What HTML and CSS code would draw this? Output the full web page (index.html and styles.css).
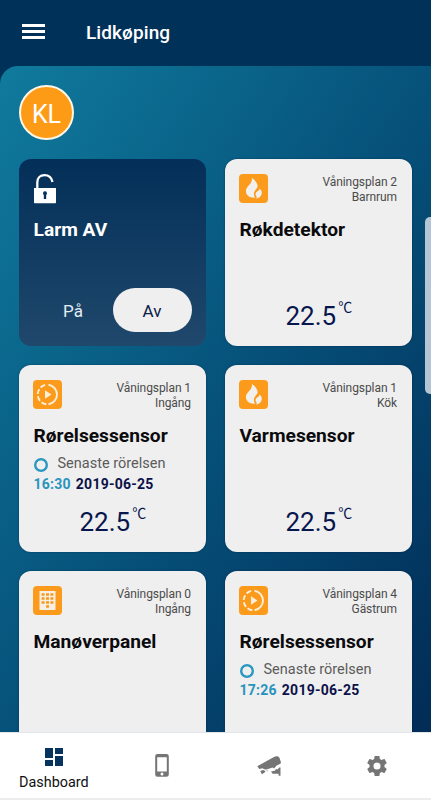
FILE: index.html
```html
<!DOCTYPE html>
<html lang="sv">
<head>
<meta charset="utf-8">
<title>Lidkøping</title>
<link rel="stylesheet" href="styles.css">
</head>
<body>
<svg class="defs" aria-hidden="true">
  <symbol id="fire" viewBox="0 0 29 29"><path d="M12.900 4c4 2.800 6.300 6.100 5.600 9.100-.5 2-3.400 3.300-3.600 6.200-.1 1.500.4 2.700 1.200 4.500-5 .4-9.200-2.400-9.200-6.700 0-4.900 6.900-7 6-13.100zM20.600 14.600c1.600 1.500 2.500 3.200 2.100 5.200-.5 2.600-2.600 4.300-5.300 4.700.3-.9.300-1.500 0-2.200-.8-1-1.300-2.300-.5-3.500 1-1.500 3.500-1.700 3.700-4.200z" fill="#f2f0ed"/></symbol>
  <symbol id="motion" viewBox="0 0 29 29"><g fill="none" stroke="#fbeedb" stroke-width="1.900"><path d="M15.500 4.700A9.900 9.900 0 0 1 15.500 24.300"/><path d="M13.300 24.300A9.900 9.900 0 0 1 4.700 14.500 9.900 9.900 0 0 1 13.300 4.700" stroke-dasharray="5.200 2.100"/></g><path d="M12 10.300v8.400l6.500-4.200z" fill="#fbeedb"/></symbol>
  <symbol id="keypad" viewBox="0 0 29 29"><path d="M6.500 5h16v19h-16z" fill="#f7efe4"/><path d="M8.600 7.200h3v2.600h-3zM13 7.200h3v2.600h-3zM17.400 7.200h3v2.600h-3zM8.600 11.200h3v2.600h-3zM13 11.200h3v2.600h-3zM17.400 11.200h3v2.600h-3zM8.600 15.200h3v2.600h-3zM13 15.200h3v2.600h-3zM17.400 15.200h3v2.600h-3zM13 19.200h3v2.600h-3z" fill="#f59a1d"/></symbol>
</svg>
<div class="app">
  <header class="topbar">
    <button class="menu" aria-label="Meny"><i></i><i></i><i></i></button>
    <h1>Lidkøping</h1>
  </header>
  <main class="content">
    <div class="avatar">KL</div>
    <div class="grid">
      <section class="card alarm">
        <svg class="lock" width="22" height="30" viewBox="0 0 22 30"><path d="M3.300 15V8.500C3.300 4 6.300 1.200 10.500 1.200c3.700 0 7 2 8 6.800" fill="none" stroke="#fff" stroke-width="2.300"/><path d="M0 14h22v14.500a.8.800 0 0 1-.8.800H.8a.8.800 0 0 1-.8-.8z" fill="#fff"/><path d="M11 17.300a2 2 0 0 0-1.200 3.600V25h2.400v-4.100A2 2 0 0 0 11 17.300z" fill="#06335d"/></svg>
        <h2>Larm AV</h2>
        <div class="toggle"><span>På</span><span class="on">Av</span></div>
      </section>
      <section class="card">
        <div class="head"><svg class="icon"><use href="#fire"/></svg><p>Våningsplan 2<br>Barnrum</p></div>
        <h2>Røkdetektor</h2>
        <div class="temp">22.5<sup>℃</sup></div>
      </section>
      <section class="card">
        <div class="head"><svg class="icon"><use href="#motion"/></svg><p>Våningsplan 1<br>Ingång</p></div>
        <h2>Rørelsessensor</h2>
        <div class="last"><i class="ring"></i><span>Senaste rörelsen</span></div>
        <div class="stamp"><span class="time">16:30</span><span>2019-06-25</span></div>
        <div class="temp">22.5<sup>℃</sup></div>
      </section>
      <section class="card">
        <div class="head"><svg class="icon"><use href="#fire"/></svg><p>Våningsplan 1<br>Kök</p></div>
        <h2>Varmesensor</h2>
        <div class="temp">22.5<sup>℃</sup></div>
      </section>
      <section class="card">
        <div class="head"><svg class="icon"><use href="#keypad"/></svg><p>Våningsplan 0<br>Ingång</p></div>
        <h2>Manøverpanel</h2>
      </section>
      <section class="card">
        <div class="head"><svg class="icon"><use href="#motion"/></svg><p>Våningsplan 4<br>Gästrum</p></div>
        <h2>Rørelsessensor</h2>
        <div class="last"><i class="ring"></i><span>Senaste rörelsen</span></div>
        <div class="stamp"><span class="time">17:26</span><span>2019-06-25</span></div>
      </section>
    </div>
    <div class="edge-handle"></div>
  </main>
  <nav class="tabs">
    <a class="tab active"><svg width="18" height="18" viewBox="0 0 18 18"><path d="M0 0h8v10H0zM10 0h8v6h-8zM0 12h8v6H0zM10 8h8v10h-8z" fill="#07345f"/></svg><span>Dashboard</span></a>
    <a class="tab"><svg width="14" height="23" viewBox="0 0 14 23"><path fill-rule="evenodd" d="M2.500 0h9A2.300 2.300 0 0 1 13.800 2.300v18.200a2.300 2.300 0 0 1-2.300 2.300h-9A2.300 2.300 0 0 1 .2 20.500V2.300A2.300 2.300 0 0 1 2.500 0zM2.200 3.200v14.300h9.600V3.200zM7 18.500a1.500 1.500 0 1 0 0 3 1.500 1.500 0 0 0 0-3z" fill="#757575"/></svg></a>
    <a class="tab"><svg width="25" height="20" viewBox="0 0 25 20"><path d="M.3 10.200 16.500 1.300c2.600-1.400 5.200-1.300 6.100.9l1.200 3.600c.3 1-.1 1.700-1 2.200l-3.500 1.800-2.100 2.700-1.600-.9-6.100 1.900c-1.500.3-2.600-.2-3.900-1.200l-3.300.6zM3.200 15l3.100-.9 2.300 1.200-1 1.300-2.700 1.700zM9.300 14.700l1.600-.5-.7 1.300zM14 15.600l3.800-.9 1.300-1.800 1.400.7 1.800-2.100h1.200v8.300h-1.900v-2.100h-6z" fill="#757575"/></svg></a>
    <a class="tab"><svg width="24" height="24" viewBox="0 0 24 24"><path d="M19.430 12.980c.04-.32.070-.64.070-.98s-.03-.66-.07-.98l2.110-1.650c.19-.15.240-.42.120-.64l-2-3.460c-.12-.22-.39-.3-.61-.22l-2.490 1c-.52-.4-1.080-.73-1.690-.98l-.38-2.650C14.460 2.180 14.250 2 14 2h-4c-.25 0-.46.180-.49.420l-.38 2.650c-.61.250-1.170.590-1.690.980l-2.490-1c-.23-.09-.49 0-.61.220l-2 3.460c-.13.220-.07.490.12.640l2.110 1.650c-.04.320-.07.650-.07.980s.03.660.07.980l-2.110 1.650c-.19.150-.24.420-.12.640l2 3.460c.12.220.39.300.61.220l2.490-1c.52.400 1.080.730 1.690.980l.38 2.650c.03.240.24.420.49.420h4c.25 0 .46-.18.490-.42l.38-2.650c.61-.25 1.170-.59 1.690-.98l2.490 1c.23.090.49 0 .61-.22l2-3.460c.12-.22.070-.49-.12-.64l-2.110-1.650zM12 15.500a3.500 3.500 0 1 1 0-7 3.500 3.500 0 0 1 0 7z" fill="#757575"/></svg></a>
  </nav>
</div>
</body>
</html>
```

FILE: styles.css
```css
* { box-sizing: border-box; }
body { margin: 0; font-family: Roboto, "Noto Sans CJK JP", sans-serif; overflow: hidden; }
h1, h2, p { margin: 0; }
.defs { display: none; }

.app { height: 800px; display: flex; flex-direction: column; background: #003158; }

.topbar { height: 66px; flex: none; display: flex; align-items: center; padding: 0 22px; }
.menu { width: 23px; padding: 0; border: 0; background: none; display: grid; gap: 3px; margin-top: -4px; }
.menu i { height: 3px; background: #fff; }
h1 { margin: -1px 0 0 41px; color: #fff; font-size: 19px; line-height: 24px; font-weight: 500; letter-spacing: .1px; }

.content {
  position: relative;
  flex: 1;
  min-height: 0;
  overflow: hidden;
  padding: 19px 19px 0;
  border-top-left-radius: 18px;
  background: linear-gradient(to bottom right, #107b9d, #06527b 50%, #012c56);
}
.avatar {
  width: 55px; height: 55px; margin-bottom: 19px;
  display: flex; align-items: center; justify-content: center;
  border: 2px solid #fff6e8; border-radius: 50%;
  background: #fe9b16; color: #fff; font-size: 25px; padding-top: 3px;
}
.grid { display: grid; grid-template-columns: repeat(2, 187px); grid-auto-rows: 187px; gap: 19px; }
.card {
  display: flex; flex-direction: column;
  padding: 15px 15px 12px 14.500px;
  border-radius: 12px;
  background: #efefef;
  box-shadow: 0 0 2px rgba(0, 24, 60, .55);
}
.alarm { background: linear-gradient(#032f58, #20486c); box-shadow: none; color: #fff; }
.lock { height: 30px; }
.head { display: flex; justify-content: space-between; height: 30px; }
.icon { width: 29px; height: 29px; border-radius: 4px; background: #fc9b1b; margin: -.5px 0 0 -.5px; }
.head p { padding-top: 1px; text-align: right; font-size: 12px; line-height: 14.500px; letter-spacing: -.08px; color: #4b4b4b; }
h2 { margin-top: 14px; font-size: 19.200px; line-height: 24px; font-weight: 700; color: #0b0b0e; white-space: nowrap; }
.alarm h2 { color: #fff; }

.toggle { display: flex; align-items: center; margin: auto 0 2px auto; }
.toggle span { width: 79px; height: 44px; display: flex; align-items: center; justify-content: center; border-radius: 22px; font-size: 17px; padding-top: 2px; color: #e4ecf4; }
.toggle .on { background: #efefef; color: #0b2046; }

.temp { margin-top: auto; padding-left: 46px; font-size: 26px; line-height: 36px; color: #07164d; display: flex; }
.temp sup { margin-left: 2px; font-size: 14px; line-height: 18px; }

.last { display: flex; align-items: center; gap: 10px; margin-top: 7px; font-size: 14.500px; line-height: 18px; color: #5b5b5b; }
.ring { width: 14px; height: 14px; margin-top: 2px; border-radius: 50%; background: radial-gradient(circle, transparent 4.200px, #2a98c0 4.900px); }
.stamp { display: flex; gap: 5px; margin-top: 2px; font-size: 14px; line-height: 18px; font-weight: 700; letter-spacing: .25px; color: #0c1149; }
.time { color: #2794be; }

.edge-handle { position: absolute; right: -5px; top: 151px; width: 11px; height: 177px; border-radius: 5px; background: #b4c5d5; }

.tabs { height: 68px; flex: none; display: grid; grid-template-columns: repeat(4, 1fr); background: #fff; border-bottom: 2px solid #ededed; border-top: 1px solid #e1e6ea; }
.tab { display: flex; flex-direction: column; align-items: center; justify-content: center; font-size: 14.400px; line-height: 18px; color: #111; }
.tab span { margin-top: 8px; }
.active { padding-top: 8px; }
```
